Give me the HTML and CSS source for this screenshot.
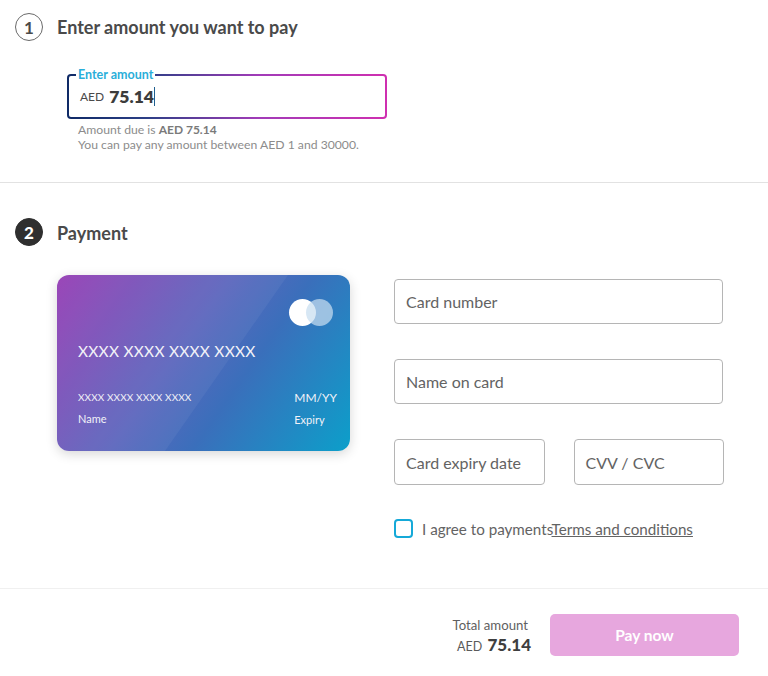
FILE: index.html
```html
<!DOCTYPE html>
<html lang="en">
<head>
<meta charset="utf-8">
<title>Payment</title>
<link rel="stylesheet" href="styles.css">
</head>
<body>
<section class="amount-section">
  <div class="step-head">
    <span class="step-num">1</span>
    <h2 class="step-title">Enter amount you want to pay</h2>
  </div>
  <div class="amount-wrap">
    <div class="amount-field">
      <span class="amount-label">Enter amount</span>
      <span class="amount-cur">AED</span>
      <span class="amount-val">75.14</span>
      <span class="caret"></span>
    </div>
    <p class="hint">Amount due is <b>AED 75.14</b><br>You can pay any amount between AED 1 and 30000.</p>
  </div>
</section>
<section class="pay-section">
  <div class="step-head">
    <span class="step-num dark">2</span>
    <h2 class="step-title">Payment</h2>
  </div>
  <div class="pay-body">
    <div class="card">
      <div class="card-sheen"></div>
      <div class="card-logo">
        <span class="logo-a"></span>
        <span class="logo-b"></span>
      </div>
      <div class="card-number">XXXX XXXX XXXX XXXX</div>
      <div class="card-bottom">
        <div>
          <div class="card-small">XXXX XXXX XXXX XXXX</div>
          <div class="card-cap">Name</div>
        </div>
        <div>
          <div class="card-exp">MM/YY</div>
          <div class="card-cap">Expiry</div>
        </div>
      </div>
    </div>
    <form class="form">
      <div class="input">Card number</div>
      <div class="input">Name on card</div>
      <div class="input-row">
        <div class="input">Card expiry date</div>
        <div class="input">CVV / CVC</div>
      </div>
      <div class="agree">
        <span class="check"></span>
        <span class="agree-text">I agree to payments<a class="terms" href="#">Terms and conditions</a></span>
      </div>
    </form>
  </div>
</section>
<footer class="footer">
  <div class="total">
    <div class="total-label">Total amount</div>
    <div class="total-value"><span class="total-cur">AED</span> <b>75.14</b></div>
  </div>
  <button class="pay" type="button">Pay now</button>
</footer>
</body>
</html>
```
FILE: styles.css
```css
* { box-sizing: border-box; }
html, body { margin: 0; padding: 0; }
body {
  width: 768px;
  height: 676px;
  overflow: hidden;
  background: #fff;
  color: #4a4a4a;
  font-family: "Lato", "Open Sans", sans-serif;
}
.amount-section {
  height: 183px;
  padding: 13px 0 0 15px;
  border-bottom: 1px solid #e2e2e2;
}
.step-head {
  display: flex;
  align-items: center;
  gap: 14px;
}
.step-num {
  width: 28px;
  height: 28px;
  border: 1px solid #6a6a6a;
  border-radius: 50%;
  display: flex;
  align-items: center;
  justify-content: center;
  font-size: 17px;
  font-weight: 700;
  color: #4a4a4a;
}
.step-num.dark {
  background: #2f2f2f;
  border-color: #2f2f2f;
  color: #fff;
  font-weight: 900;
}
.step-title {
  margin: 0;
  font-size: 18px;
  font-weight: 700;
  color: #4a4a4a;
}
.pay-section .step-title { padding-top: 2px; }
.amount-wrap { margin: 33px 0 0 52px; }
.amount-field {
  position: relative;
  width: 320px;
  height: 45px;
  border: 2px solid transparent;
  border-radius: 4px;
  background:
    linear-gradient(#fff, #fff) padding-box,
    linear-gradient(90deg, #0f2a66 0%, #2c3f86 25%, #a23bb8 60%, #cf2fb0 100%) border-box;
  display: flex;
  align-items: center;
  padding: 0 0 0 11px;
}
.amount-label {
  position: absolute;
  left: 7px;
  top: -8px;
  padding: 0 2px;
  background: #fff;
  font-size: 12.5px;
  line-height: 13px;
  font-weight: 700;
  color: #2aaed9;
}
.amount-cur { font-size: 12px; color: #4a4a4a; margin-right: 5px; }
.amount-val { font-size: 17.5px; font-weight: 800; color: #3c3c3c; }
.caret {
  width: 1px;
  height: 19px;
  background: #1f5f8f;
  margin-left: 0;
}
.hint {
  margin: 3px 0 0 11px;
  font-size: 12.2px;
  line-height: 15px;
  color: #8c8c8c;
}
.hint b { color: #7a7a7a; font-size: 12px; }
.pay-section {
  height: 406px;
  padding: 35px 0 0 15px;
  border-bottom: 1px solid #f0f0f0;
}
.pay-body {
  display: flex;
  margin: 29px 0 0 42px;
}
.card {
  position: relative;
  overflow: hidden;
  width: 293px;
  height: 176px;
  border-radius: 12px;
  background: linear-gradient(125deg, #963db5 0%, #5c66bd 42%, #3a6fbb 62%, #0c9fca 100%);
  box-shadow: 0 3px 12px rgba(0, 0, 0, 0.16);
  color: #f2f2f8;
  padding: 67px 13px 0 21px;
}
.card-sheen {
  position: absolute;
  left: 0;
  top: 0;
  width: 100%;
  height: 100%;
  background: rgba(255, 255, 255, 0.05);
  clip-path: polygon(0 0, 231px 0, 108px 176px, 0 176px);
}
.card-logo {
  position: absolute;
  right: 17px;
  top: 24px;
  width: 44px;
  height: 27px;
}
.logo-a, .logo-b {
  position: absolute;
  top: 0;
  width: 27px;
  height: 27px;
  border-radius: 50%;
}
.logo-a { left: 0; background: #fff; }
.logo-b { right: 0; background: rgba(200, 222, 240, 0.72); }
.card-number {
  position: relative;
  font-size: 15.5px;
  line-height: 18px;
  letter-spacing: 0.25px;
  white-space: nowrap;
}
.card-bottom {
  position: relative;
  display: flex;
  justify-content: space-between;
  margin-top: 28px;
}
.card-small {
  font-size: 10px;
  line-height: 18px;
  letter-spacing: 0.1px;
}
.card-exp { font-size: 12px; line-height: 19px; }
.card-cap { font-size: 11px; line-height: 14px; margin-top: 6px; }
.form {
  width: 330px;
  margin: 4px 0 0 44px;
}
.input {
  height: 45px;
  width: 329px;
  margin-bottom: 35px;
  border: 1px solid #b5b5b5;
  border-radius: 4px;
  display: flex;
  align-items: center;
  padding-left: 11px;
  font-size: 16px;
  color: #636363;
}
.input-row {
  display: flex;
  gap: 29px;
  margin-bottom: -1px;
}
.input-row .input { width: 150.5px; height: 46px; }
.agree {
  display: flex;
  align-items: center;
  gap: 9px;
  font-size: 15.2px;
  color: #636363;
}
.check {
  width: 19px;
  height: 19px;
  border: 2px solid #15a9d8;
  border-radius: 4px;
}
.terms { color: #636363; text-decoration: underline; }
.footer {
  display: flex;
  justify-content: flex-end;
  align-items: flex-start;
  gap: 19px;
  padding: 25px 29px 0 0;
}
.total { text-align: right; margin-top: 3px; }
.total-label { font-size: 13.2px; line-height: 16px; color: #5f5f5f; margin-right: 3px; }
.total-value { font-size: 12.5px; line-height: 24px; color: #5a5a5a; }
.total-value b { font-size: 17px; font-weight: 900; color: #3f3f3f; margin-left: 2px; }
.pay {
  width: 189px;
  height: 42px;
  border: 0;
  border-radius: 5px;
  background: #e7a7de;
  color: #fff;
  font: 700 15.5px "Lato", sans-serif;
}
```
